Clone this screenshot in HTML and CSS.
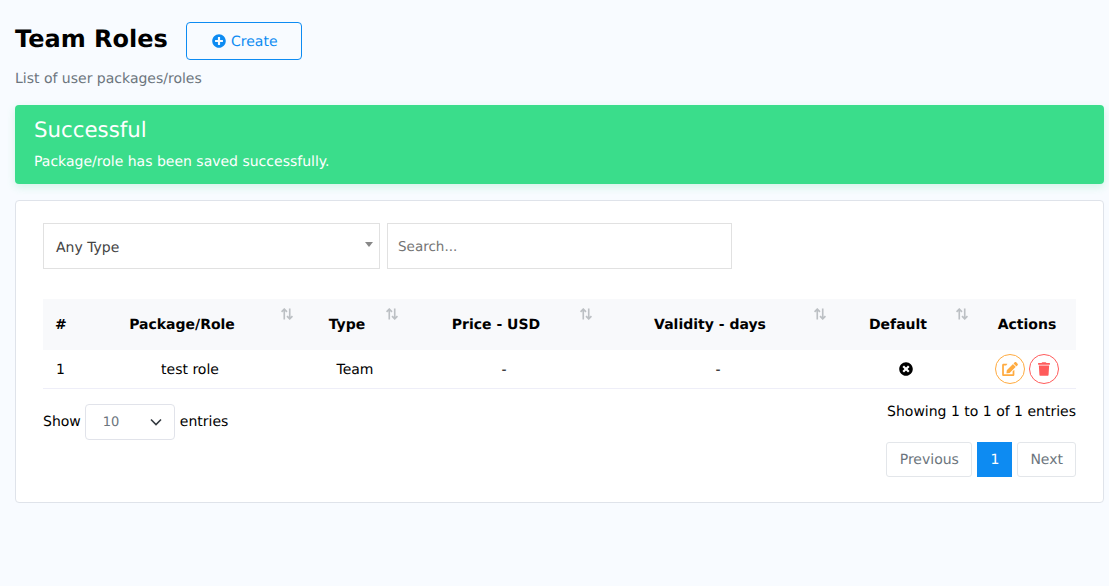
FILE: index.html
```html
<!DOCTYPE html>
<html lang="en">
<head>
<meta charset="utf-8">
<title>Team Roles</title>
<link rel="stylesheet" href="styles.css">
</head>
<body>
<main class="page">
  <div class="title-row">
    <h1 class="title">Team Roles</h1>
    <a class="btn-create"><svg class="ico-plus" viewBox="0 0 512 512"><path d="M256 8C119 8 8 119 8 256s111 248 248 248 248-111 248-248S393 8 256 8zm144 276c0 6.6-5.4 12-12 12h-92v92c0 6.6-5.4 12-12 12h-56c-6.6 0-12-5.4-12-12v-92h-92c-6.6 0-12-5.4-12-12v-56c0-6.6 5.4-12 12-12h92v-92c0-6.6 5.4-12 12-12h56c6.6 0 12 5.4 12 12v92h92c6.6 0 12 5.4 12 12v56z"/></svg><span class="create-label">Create</span></a>
  </div>
  <p class="subtitle">List of user packages/roles</p>
  <div class="alert">
    <h4 class="alert-title">Successful</h4>
    <p class="alert-text">Package/role has been saved successfully.</p>
  </div>
  <section class="card">
    <div class="filters">
      <div class="type-select">Any Type<span class="caret"></span></div>
      <div class="search">Search...</div>
    </div>
    <table class="roles">
      <colgroup>
        <col class="c1"><col class="c2"><col class="c3"><col class="c4"><col class="c5"><col class="c6"><col class="c7">
      </colgroup>
      <thead>
        <tr>
          <th class="num">#</th>
          <th class="sortable">Package/Role<svg class="sort" viewBox="0.5 0.5 11 11"><path d="M3.5 11V1.5M1 4l2.5-2.5L6 4M8.5 1v9.5M6 8l2.5 2.5L11 8"/></svg></th>
          <th class="sortable">Type<svg class="sort sort-type" viewBox="0.5 0.5 11 11"><path d="M3.5 11V1.5M1 4l2.5-2.5L6 4M8.5 1v9.5M6 8l2.5 2.5L11 8"/></svg></th>
          <th class="sortable">Price - USD<svg class="sort sort-price" viewBox="0.5 0.5 11 11"><path d="M3.5 11V1.5M1 4l2.5-2.5L6 4M8.5 1v9.5M6 8l2.5 2.5L11 8"/></svg></th>
          <th class="sortable">Validity - days<svg class="sort sort-type" viewBox="0.5 0.5 11 11"><path d="M3.5 11V1.5M1 4l2.5-2.5L6 4M8.5 1v9.5M6 8l2.5 2.5L11 8"/></svg></th>
          <th class="sortable">Default<svg class="sort sort-price" viewBox="0.5 0.5 11 11"><path d="M3.5 11V1.5M1 4l2.5-2.5L6 4M8.5 1v9.5M6 8l2.5 2.5L11 8"/></svg></th>
          <th>Actions</th>
        </tr>
      </thead>
      <tbody>
        <tr>
          <td class="num txt">1</td>
          <td class="txt">test role</td>
          <td class="txt">Team</td>
          <td class="txt">-</td>
          <td class="txt">-</td>
          <td><svg class="ico-x" viewBox="0 0 512 512"><path d="M256 8C119 8 8 119 8 256s111 248 248 248 248-111 248-248S393 8 256 8zm121.6 313.1c4.7 4.7 4.7 12.3 0 17L338 377.6c-4.7 4.7-12.3 4.7-17 0L256 312l-65.1 65.6c-4.7 4.7-12.3 4.7-17 0L134.4 338c-4.7-4.7-4.7-12.3 0-17l65.6-65-65.6-65.1c-4.7-4.7-4.7-12.3 0-17l39.6-39.6c4.7-4.7 12.3-4.7 17 0l65 65.7 65.1-65.6c4.7-4.7 12.3-4.7 17 0l39.6 39.6c4.7 4.7 4.7 12.3 0 17L312 256l65.6 65.1z"/></svg></td>
          <td>
            <div class="actions">
              <a class="round edit"><svg class="ico-edit" viewBox="0 0 576 512"><path d="M402.6 83.2l90.2 90.2c3.8 3.8 3.8 10 0 13.8L274.4 405.6l-92.8 10.3c-12.4 1.4-22.9-9.1-21.5-21.5l10.3-92.8L388.8 83.2c3.8-3.8 10-3.8 13.8 0zm162-22.9l-48.8-48.8c-15.2-15.2-39.9-15.2-55.2 0l-35.4 35.4c-3.8 3.8-3.8 10 0 13.8l90.2 90.2c3.8 3.8 10 3.8 13.8 0l35.4-35.4c15.2-15.3 15.2-40 0-55.2zM384 346.2V448H64V128h73.1c3.2 0 6.2-1.3 8.5-3.5l40-40c7.6-7.6 2.2-20.5-8.5-20.5H48C21.5 64 0 85.5 0 112v352c0 26.5 21.5 48 48 48h352c26.5 0 48-21.5 48-48V306.2c0-10.7-12.9-16-20.5-8.5l-40 40c-2.2 2.3-3.5 5.3-3.5 8.5z"/></svg></a>
              <a class="round del"><svg class="ico-trash" viewBox="0 0 448 512"><path d="M432 32H312l-9.4-18.7A24 24 0 0 0 281.1 0H166.8a23.72 23.72 0 0 0-21.4 13.3L136 32H16A16 16 0 0 0 0 48v32a16 16 0 0 0 16 16h416a16 16 0 0 0 16-16V48a16 16 0 0 0-16-16zM53.2 467a48 48 0 0 0 47.9 45h245.8a48 48 0 0 0 47.9-45L416 128H32z"/></svg></a>
            </div>
          </td>
        </tr>
      </tbody>
    </table>
    <div class="table-foot">
      <div class="length">Show <span class="length-select"><span class="length-value">10</span><svg class="chev" viewBox="0 0 12 8"><path d="M1 1.5l5 5 5-5"/></svg></span> entries</div>
      <div class="foot-right">
        <div class="info">Showing 1 to 1 of 1 entries</div>
        <div class="pager">
          <a class="page-btn prev">Previous</a>
          <a class="page-btn current">1</a>
          <a class="page-btn">Next</a>
        </div>
      </div>
    </div>
  </section>
</main>
</body>
</html>
```
FILE: styles.css
```css
* { box-sizing: border-box; }
html, body { margin: 0; height: 100%; }
body {
  background: #f8fbff;
  font-family: "DejaVu Sans", sans-serif;
  font-size: 14px;
  color: #000;
  overflow: hidden;
  text-rendering: geometricPrecision;
}
.page { padding: 22px 5px 0 15px; }
.title-row { display: flex; align-items: center; gap: 18px; height: 38px; }
.title { margin: 0 0 4px; font-size: 24px; line-height: 34px; font-weight: 700; }
.btn-create {
  width: 116px; height: 38px; padding: 0 0 0 2px;
  display: flex; align-items: center; justify-content: center; gap: 5px;
  border: 1px solid #0d8bf2; border-radius: 4px;
  color: #0d8bf2;
}
.create-label { padding-top: 2px; }
.ico-plus { width: 14px; height: 14px; fill: #0d8bf2; }
.subtitle { margin: 9px 0 0; height: 20px; line-height: 20px; color: #6c757d; }
.alert {
  margin-top: 16px; height: 79px; padding: 12px 19px 0;
  background: #3add8b; border-radius: 4px; color: #fff;
  box-shadow: 0 3px 8px rgba(58, 222, 139, .2);
}
.alert-title { margin: 0; font-size: 21.3px; line-height: 28px; font-weight: 400; }
.alert-text { margin: 7px 0 0; line-height: 20px; }
.card {
  margin-top: 16px; height: 303px; padding: 22px 27px;
  background: #fff; border: 1px solid #dfe3ea; border-radius: 4px;
}
.filters { display: flex; gap: 7px; height: 46px; }
.type-select {
  width: 337px; height: 46px; padding: 3px 12px 0;
  display: flex; align-items: center;
  border: 1px solid #e1e1e1; color: #444; position: relative;
}
.caret {
  position: absolute; right: 6px; top: 18px;
  border: 4px solid transparent; border-top: 5px solid #888; border-bottom: 0;
}
.search {
  width: 345px; height: 46px; padding: 2px 10px 0;
  display: flex; align-items: center;
  border: 1px solid #e1e1e1; color: #757575; font-size: 13.5px;
}
.roles { width: 100%; margin-top: 30px; border-collapse: collapse; table-layout: fixed; }
.c1 { width: 33px; } .c2 { width: 228px; } .c3 { width: 102px; } .c4 { width: 196px; }
.c5 { width: 232px; } .c6 { width: 144px; } .c7 { width: 98px; }
th {
  height: 51px; padding: 1px 0 0;
  background: #f8f9fb; font-weight: 700; text-align: center; position: relative;
  white-space: nowrap;
}
th.sortable { padding-right: 16px; }
th.num { text-align: left; padding-left: 12px; }
td.num { text-align: left; padding-left: 13px; }
td { height: 38px; padding: 0; text-align: center; border-bottom: 1px solid #eeeef8; }
td.txt { padding-top: 2px; }
.sort {
  position: absolute; right: 11px; top: 9px; width: 12px; height: 12px;
  fill: none; stroke: #bcc0c4; stroke-width: 1.5;
}
.sort-type { right: 8px; }
.sort-price { right: 10px; }
.ico-x { width: 14px; height: 14px; fill: #000; display: block; margin: 0 auto; }
.actions { display: flex; justify-content: center; gap: 4px; }
.round { width: 30px; height: 30px; border-radius: 50%; display: flex; align-items: center; justify-content: center; border: 1px solid; }
.edit { border-color: #ffab40; }
.del { border-color: #ff5b5b; }
.ico-edit { width: 16px; height: 14px; fill: #ffab40; }
.ico-trash { width: 12px; height: 14px; fill: #ff5b5b; }
.table-foot { display: flex; justify-content: space-between; }
.length { display: flex; align-items: center; gap: 4px; height: 36px; margin-top: 15px; }
.length-select {
  width: 90px; height: 36px; padding: 0 12px 0 17px; margin: 0 1px 0 0;
  display: flex; align-items: center; justify-content: space-between;
  border: 1px solid #e1e3ea; border-radius: 4px; color: #6c757d; font-size: 13px;
}
.length-value { padding-top: 2px; }
.chev { width: 12px; height: 8px; fill: none; stroke: #343a40; stroke-width: 1.6; }
.foot-right { display: flex; flex-direction: column; align-items: flex-end; }
.info { margin-top: 13px; line-height: 20px; }
.pager { display: flex; gap: 5px; margin-top: 20px; }
.page-btn {
  height: 35px; padding: 2px 12px 0; display: flex; align-items: center;
  border: 1px solid #e3e6ea; border-radius: 3px; color: #6c757d;
}
.prev { padding: 2px 12.5px 0; }
.current { width: 35px; background: #0d8bf2; border-color: #0d8bf2; border-radius: 0; color: #fff; padding: 2px 0 0; justify-content: center; }
```
